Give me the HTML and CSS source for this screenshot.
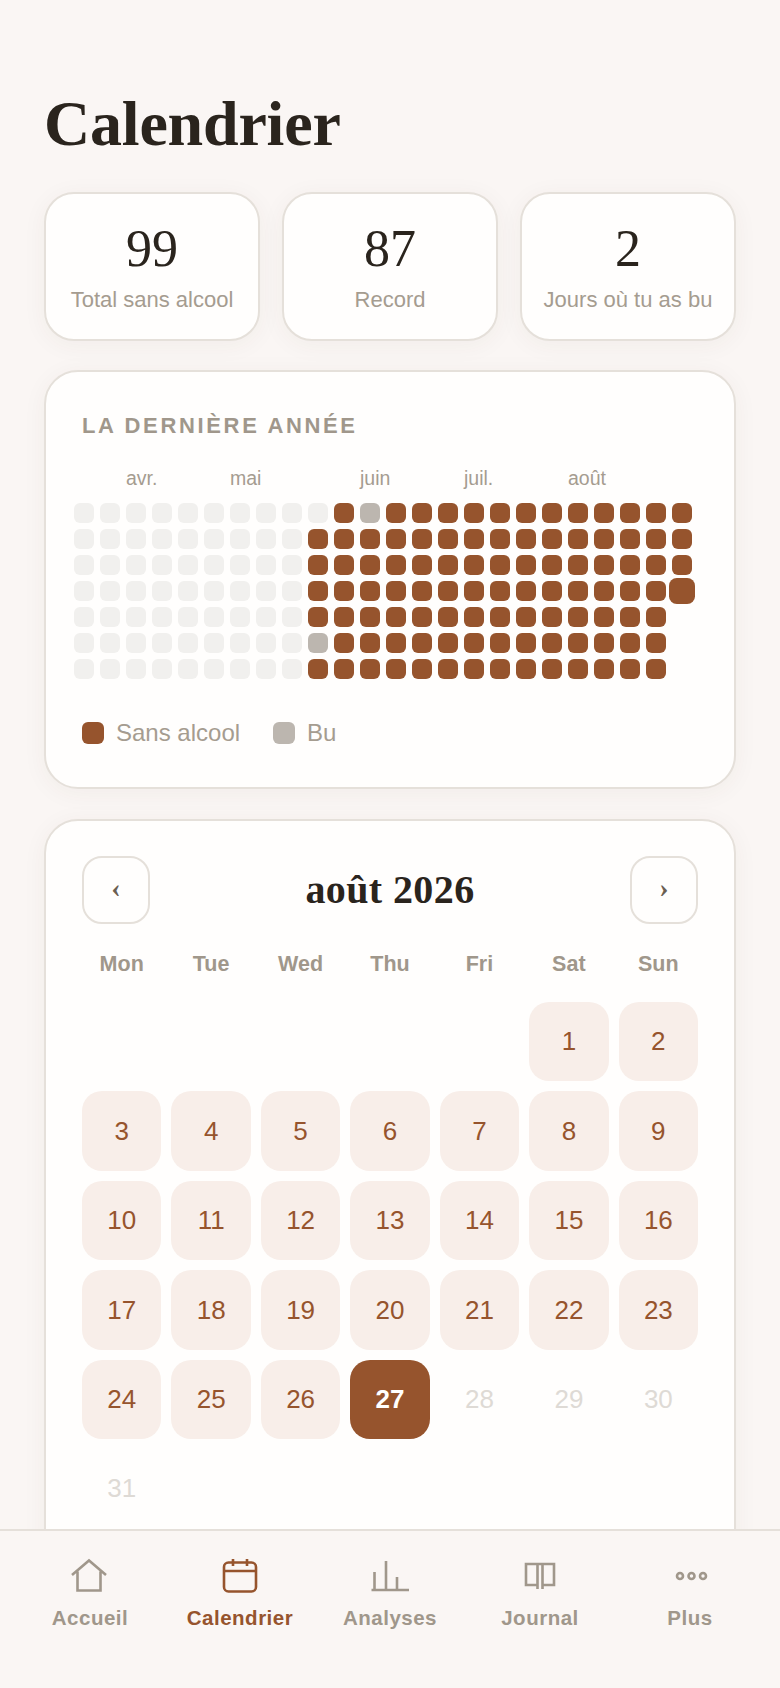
FILE: index.html
```html
<!DOCTYPE html>
<html lang="fr">
<head>
<meta charset="utf-8">
<title>Calendrier</title>
<link rel="stylesheet" href="styles.css">
</head>
<body>
<div class="screen">
  <main class="content">
    <h1 class="title">Calendrier</h1>
    <section class="stats">
      <div class="stat"><div class="stat-num">99</div><div class="stat-label">Total sans alcool</div></div>
      <div class="stat"><div class="stat-num">87</div><div class="stat-label">Record</div></div>
      <div class="stat"><div class="stat-num">2</div><div class="stat-label">Jours où tu as bu</div></div>
    </section>
    <section class="card year">
      <h2 class="year-title">LA DERNIÈRE ANNÉE</h2>
      <div class="months">
        <span class="m-avr">avr.</span><span class="m-mai">mai</span><span class="m-juin">juin</span><span class="m-juil">juil.</span><span class="m-aout">août</span>
      </div>
      <div class="heat">
        <i class="e"></i><i class="e"></i><i class="e"></i><i class="e"></i><i class="e"></i><i class="e"></i><i class="e"></i><i class="e"></i><i class="e"></i><i class="e"></i><i class="s"></i><i class="d"></i><i class="s"></i><i class="s"></i><i class="s"></i><i class="s"></i><i class="s"></i><i class="s"></i><i class="s"></i><i class="s"></i><i class="s"></i><i class="s"></i><i class="s"></i><i class="s"></i>
        <i class="e"></i><i class="e"></i><i class="e"></i><i class="e"></i><i class="e"></i><i class="e"></i><i class="e"></i><i class="e"></i><i class="e"></i><i class="s"></i><i class="s"></i><i class="s"></i><i class="s"></i><i class="s"></i><i class="s"></i><i class="s"></i><i class="s"></i><i class="s"></i><i class="s"></i><i class="s"></i><i class="s"></i><i class="s"></i><i class="s"></i><i class="s"></i>
        <i class="e"></i><i class="e"></i><i class="e"></i><i class="e"></i><i class="e"></i><i class="e"></i><i class="e"></i><i class="e"></i><i class="e"></i><i class="s"></i><i class="s"></i><i class="s"></i><i class="s"></i><i class="s"></i><i class="s"></i><i class="s"></i><i class="s"></i><i class="s"></i><i class="s"></i><i class="s"></i><i class="s"></i><i class="s"></i><i class="s"></i><i class="s"></i>
        <i class="e"></i><i class="e"></i><i class="e"></i><i class="e"></i><i class="e"></i><i class="e"></i><i class="e"></i><i class="e"></i><i class="e"></i><i class="s"></i><i class="s"></i><i class="s"></i><i class="s"></i><i class="s"></i><i class="s"></i><i class="s"></i><i class="s"></i><i class="s"></i><i class="s"></i><i class="s"></i><i class="s"></i><i class="s"></i><i class="s"></i><i class="s t"></i>
        <i class="e"></i><i class="e"></i><i class="e"></i><i class="e"></i><i class="e"></i><i class="e"></i><i class="e"></i><i class="e"></i><i class="e"></i><i class="s"></i><i class="s"></i><i class="s"></i><i class="s"></i><i class="s"></i><i class="s"></i><i class="s"></i><i class="s"></i><i class="s"></i><i class="s"></i><i class="s"></i><i class="s"></i><i class="s"></i><i class="s"></i><i></i>
        <i class="e"></i><i class="e"></i><i class="e"></i><i class="e"></i><i class="e"></i><i class="e"></i><i class="e"></i><i class="e"></i><i class="e"></i><i class="d"></i><i class="s"></i><i class="s"></i><i class="s"></i><i class="s"></i><i class="s"></i><i class="s"></i><i class="s"></i><i class="s"></i><i class="s"></i><i class="s"></i><i class="s"></i><i class="s"></i><i class="s"></i><i></i>
        <i class="e"></i><i class="e"></i><i class="e"></i><i class="e"></i><i class="e"></i><i class="e"></i><i class="e"></i><i class="e"></i><i class="e"></i><i class="s"></i><i class="s"></i><i class="s"></i><i class="s"></i><i class="s"></i><i class="s"></i><i class="s"></i><i class="s"></i><i class="s"></i><i class="s"></i><i class="s"></i><i class="s"></i><i class="s"></i><i class="s"></i><i></i>
      </div>
      <div class="legend">
        <span class="legend-item"><i class="swatch s"></i>Sans alcool</span>
        <span class="legend-item"><i class="swatch d"></i>Bu</span>
      </div>
    </section>
    <section class="card month">
      <div class="month-head">
        <button class="nav-btn" type="button">‹</button>
        <div class="month-title">août 2026</div>
        <button class="nav-btn" type="button">›</button>
      </div>
      <div class="weekdays">
        <span>Mon</span><span>Tue</span><span>Wed</span><span>Thu</span><span>Fri</span><span>Sat</span><span>Sun</span>
      </div>
      <div class="days">
        <span class="day blank"></span><span class="day blank"></span><span class="day blank"></span><span class="day blank"></span><span class="day blank"></span>
        <span class="day sober">1</span><span class="day sober">2</span>
        <span class="day sober">3</span><span class="day sober">4</span><span class="day sober">5</span><span class="day sober">6</span><span class="day sober">7</span><span class="day sober">8</span><span class="day sober">9</span>
        <span class="day sober">10</span><span class="day sober">11</span><span class="day sober">12</span><span class="day sober">13</span><span class="day sober">14</span><span class="day sober">15</span><span class="day sober">16</span>
        <span class="day sober">17</span><span class="day sober">18</span><span class="day sober">19</span><span class="day sober">20</span><span class="day sober">21</span><span class="day sober">22</span><span class="day sober">23</span>
        <span class="day sober">24</span><span class="day sober">25</span><span class="day sober">26</span><span class="day today">27</span><span class="day future">28</span><span class="day future">29</span><span class="day future">30</span>
        <span class="day future">31</span>
      </div>
    </section>
  </main>
  <nav class="tabbar">
    <a class="tab">
      <svg class="tab-icon" viewBox="0 0 36 36"><path d="M0 17 17 2.500 34 17M5.500 13.500V32.500H28.500V13.500"/></svg>
      <span>Accueil</span>
    </a>
    <a class="tab active">
      <svg class="tab-icon" viewBox="0 0 36 36"><rect x="2" y="4.500" width="32" height="29" rx="4.500"/><path d="M2 13H34M11 1V8M25 1V8"/></svg>
      <span>Calendrier</span>
    </a>
    <a class="tab">
      <svg class="tab-icon" viewBox="0 0 36 36"><path d="M-.5 32H37M2.500 14V32M14 3V32M25 19V32"/></svg>
      <span>Analyses</span>
    </a>
    <a class="tab">
      <svg class="tab-icon" viewBox="0 0 36 36"><path d="M15.500 6H4V27H15.500M20.500 6H32V27H20.500M15.500 6H20.500M15.500 6V31M20.500 6V31"/></svg>
      <span>Journal</span>
    </a>
    <a class="tab">
      <svg class="tab-icon" viewBox="0 0 36 36"><circle cx="8" cy="18" r="3"/><circle cx="19.500" cy="18" r="3"/><circle cx="31" cy="18" r="3"/></svg>
      <span>Plus</span>
    </a>
  </nav>
</div>
</body>
</html>
```
FILE: styles.css
```css
* { box-sizing: border-box; }
html, body { margin: 0; padding: 0; height: 100%; overflow: hidden; }
body {
  background: #faf6f4;
  font-family: "Liberation Sans", Arial, sans-serif;
  color: #2a241d;
}
.screen { display: flex; flex-direction: column; height: 1688px; }
.content { flex: 1 1 0; min-height: 0; overflow: hidden; padding: 92px 44px 0; }
.title {
  margin: 0 0 36px;
  font-family: "Liberation Serif", "Times New Roman", serif;
  font-size: 64px;
  line-height: 64px;
  font-weight: 700;
  letter-spacing: -.2px;
  color: #2a241d;
}
.stats { display: grid; grid-template-columns: repeat(3, 1fr); gap: 22px; margin-bottom: 29px; }
.stat {
  background: #fffefd;
  border: 2px solid #e5e0da;
  border-radius: 30px;
  padding: 29px 0 26px;
  text-align: center;
  box-shadow: 0 4px 24px rgba(70, 50, 30, .05);
}
.stat-num {
  font-family: "Liberation Serif", "Times New Roman", serif;
  font-size: 52px;
  line-height: 52px;
  color: #2a241d;
}
.stat-label { margin-top: 12px; font-size: 22px; line-height: 26px; color: #a59c90; white-space: nowrap; }
.card {
  background: #fffefd;
  border: 2px solid #e5e0da;
  border-radius: 34px;
  box-shadow: 0 4px 24px rgba(70, 50, 30, .05);
}
.year { padding: 41px 36px 43px; margin-bottom: 30px; }
.year-title { margin: 0 0 28px; font-size: 22px; line-height: 26px; font-weight: 700; letter-spacing: 2.65px; color: #a0978b; }
.months, .heat {
  display: grid;
  grid-template-columns: repeat(24, 20px);
  column-gap: 6px;
  margin-left: -8px;
}
.months { font-size: 19.5px; line-height: 22px; color: #a59c90; margin-bottom: 14px; }
.months span { white-space: nowrap; }
.m-avr { grid-column: 3 / span 4; }
.m-mai { grid-column: 7 / span 5; }
.m-juin { grid-column: 12 / span 4; }
.m-juil { grid-column: 16 / span 4; }
.m-aout { grid-column: 20 / span 4; }
.heat { grid-auto-rows: 20px; row-gap: 6px; }
.heat i, .swatch { display: block; border-radius: 6px; }
.e { background: #f1f0ee; }
.s { background: #96542d; }
.d { background: #bcb6af; }
.t { transform: scale(1.3); }
.legend { display: flex; gap: 33px; margin-top: 43px; font-size: 24px; line-height: 22px; color: #a59c90; }
.legend-item { display: flex; align-items: center; gap: 12px; }
.swatch { width: 22px; height: 22px; }
.month { padding: 35px 36px 40px; }
.month-head { display: flex; align-items: center; justify-content: space-between; }
.nav-btn {
  width: 68px;
  height: 68px;
  padding: 0 0 4px;
  background: transparent;
  border: 2px solid #e5e0da;
  border-radius: 20px;
  font-family: "Liberation Serif", serif;
  font-size: 28px;
  font-weight: 700;
  line-height: 1;
  color: #6b5f52;
}
.month-title {
  font-family: "Liberation Serif", "Times New Roman", serif;
  font-size: 40px;
  line-height: 48px;
  font-weight: 700;
  letter-spacing: .4px;
  color: #2a241d;
}
.weekdays {
  display: grid;
  grid-template-columns: repeat(7, 1fr);
  gap: 10px;
  margin: 27px 0 25px;
  text-align: center;
  font-size: 21.5px;
  line-height: 26px;
  font-weight: 700;
  color: #a0978b;
}
.days { display: grid; grid-template-columns: repeat(7, 1fr); gap: 10px; }
.day {
  display: flex;
  align-items: center;
  justify-content: center;
  aspect-ratio: 1;
  border-radius: 20px;
  font-size: 26px;
}
.sober { background: #f8eee9; color: #96542d; }
.today { background: #96542d; color: #fff; font-weight: 700; }
.future { color: #dedad5; }
.tabbar {
  flex: none;
  display: grid;
  grid-template-columns: repeat(5, 150px);
  height: 159px;
  padding: 27px 15px 0;
  background: #faf6f4;
  border-top: 2px solid #e5e0da;
}
.tab {
  display: flex;
  flex-direction: column;
  align-items: center;
  gap: 12px;
  font-size: 20.5px;
  line-height: 24px;
  font-weight: 700;
  letter-spacing: .5px;
  color: #a0978b;
}
.tab.active { color: #96542d; }
.tab-icon {
  width: 36px;
  height: 36px;
  overflow: visible;
  fill: none;
  stroke: currentColor;
  stroke-width: 2.6;
}
```
